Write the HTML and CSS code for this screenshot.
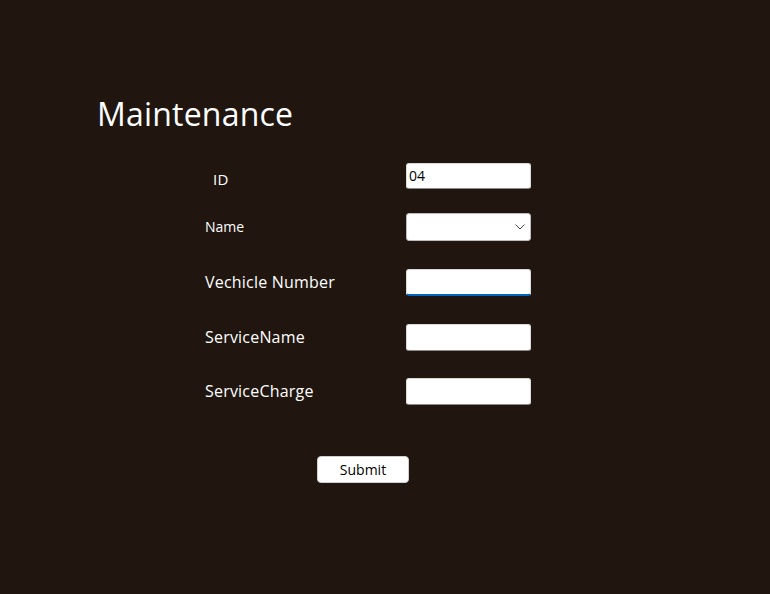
FILE: index.html
```html
<!DOCTYPE html>
<html>
<head>
<meta charset="utf-8">
<link rel="stylesheet" href="styles.css">
</head>
<body>
<main class="page">
  <h1 class="title">Maintenance</h1>
  <form class="form">
    <div class="row row-id">
      <label class="label label-id">ID</label>
      <div class="field field-text">04</div>
    </div>
    <div class="row row-name">
      <label class="label label-small">Name</label>
      <div class="field field-select">
        <svg class="chev" width="10" height="6" viewBox="0 0 10 6"><path d="M0.5 0.5 L5 5 L9.5 0.5" fill="none" stroke="#444" stroke-width="1"/></svg>
      </div>
    </div>
    <div class="row row-veh">
      <label class="label">Vechicle Number</label>
      <div class="field field-focus"></div>
    </div>
    <div class="row row-sn">
      <label class="label">ServiceName</label>
      <div class="field"></div>
    </div>
    <div class="row row-sc">
      <label class="label">ServiceCharge</label>
      <div class="field"></div>
    </div>
    <div class="actions">
      <button type="button" class="btn">Submit</button>
    </div>
  </form>
</main>
</body>
</html>
```
FILE: styles.css
```css
html, body {
  margin: 0;
  padding: 0;
  background: #20160f;
  height: 100%;
}
body {
  font-family: "Open Sans", "Noto Sans", sans-serif;
  color: #ffffff;
}
.page {
  padding: 92px 0 0 97px;
}
.title {
  margin: 0;
  font-weight: 400;
  font-size: 32px;
  line-height: 44px;
  letter-spacing: 0.2px;
}
.form {
  margin: 27px 0 0 108px;
  display: flex;
  flex-direction: column;
}
.row {
  display: flex;
  align-items: center;
}
.label {
  width: 201px;
  font-size: 16px;
  line-height: 20px;
  letter-spacing: 0.2px;
  position: relative;
  top: -1px;
}
.label-id {
  padding-left: 8px;
  box-sizing: border-box;
  font-size: 15px;
  top: 3px;
}
.label-small {
  font-size: 14px;
  top: 0;
  letter-spacing: 0;
}
.field {
  width: 125px;
  height: 27px;
  box-sizing: border-box;
  background: #fff;
  border: 1px solid #d9d9d9;
  border-bottom-color: #8a8a8a;
  border-radius: 3px;
  color: #000;
  font-size: 14px;
  line-height: 25px;
  padding-left: 2px;
}
.field-text {
  height: 26px;
  line-height: 24px;
}
.field-select {
  height: 28px;
  display: flex;
  align-items: center;
  justify-content: flex-end;
  padding-right: 5px;
  border-color: #bcbcbc;
}
.field-focus {
  border-bottom: 2px solid #0067c0;
}
.row-name { margin-top: 24px; }
.row-veh { margin-top: 28px; }
.row-sn { margin-top: 28px; }
.row-sc { margin-top: 27px; }
.actions {
  margin-top: 51px;
  padding-left: 112px;
}
.btn {
  width: 92px;
  height: 27px;
  background: #fff;
  border: 1px solid #d0d0d0;
  border-radius: 4px;
  font-family: "Open Sans", "Noto Sans", sans-serif;
  font-size: 14px;
  color: #000;
  padding: 0;
}
```
